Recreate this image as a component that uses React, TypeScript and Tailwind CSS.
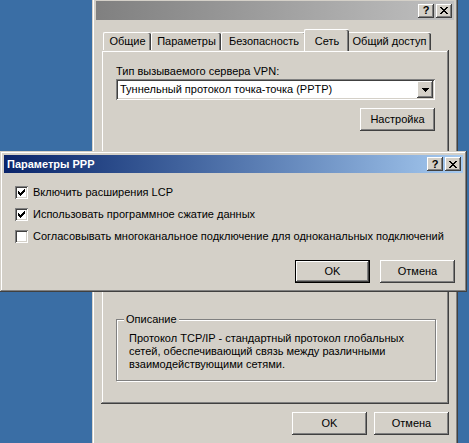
import React from "react";

const font = { fontFamily: '"Liberation Sans", Arial, sans-serif' };

// classic 3D bevels
const raised =
  "shadow-[inset_-1px_-1px_0_#404040,inset_1px_1px_0_#ffffff,inset_-2px_-2px_0_#808080,inset_2px_2px_0_#d4d0c8]";
const frame =
  "shadow-[inset_-1px_-1px_0_#404040,inset_1px_1px_0_#d4d0c8,inset_-2px_-2px_0_#808080,inset_2px_2px_0_#ffffff]";
const sunken =
  "shadow-[inset_1px_1px_0_#808080,inset_-1px_-1px_0_#ffffff,inset_2px_2px_0_#404040,inset_-2px_-2px_0_#d4d0c8]";

function CaptionButtons() {
  return (
    <div className="flex gap-[2px]">
      <div className={`w-[16px] h-[14px] bg-[#d4d0c8] ${raised} flex items-center justify-center text-[11px] font-bold text-black leading-none`}>
        ?
      </div>
      <div className={`w-[16px] h-[14px] bg-[#d4d0c8] ${raised} flex items-center justify-center`}>
        <svg width="8" height="7" viewBox="0 0 8 7">
          <path d="M0 0h2v1h1v1h2v-1h1v-1h2v1h-1v1h-1v1h-1v1h1v1h1v1h1v1h-2v-1h-1v-1h-2v1h-1v1h-2v-1h1v-1h1v-1h1v-1h-1v-1h-1v-1h-1z" fill="#000" />
        </svg>
      </div>
    </div>
  );
}

function Button({ label, isDefault, w = 75 }: { label: string; isDefault?: boolean; w?: number }) {
  if (isDefault) {
    return (
      <div className="border border-black" style={{ width: w }}>
        <div className={`h-[21px] bg-[#d4d0c8] ${raised} flex items-center justify-center text-black`}>
          {label}
        </div>
      </div>
    );
  }
  return (
    <div
      className={`h-[23px] bg-[#d4d0c8] ${raised} flex items-center justify-center text-black`}
      style={{ width: w }}
    >
      {label}
    </div>
  );
}

function Check({ checked }: { checked?: boolean }) {
  return (
    <div className={`w-[13px] h-[13px] bg-white ${sunken} flex items-center justify-center shrink-0`}>
      {checked && (
        <svg width="7" height="7" viewBox="0 0 7 7">
          <path d="M0 2h1v1h1v1h1v-1h1v-1h1v-1h1v-1h1v3h-1v1h-1v1h-1v1h-1v1h-1v-1h-1v-1h-1z" fill="#000" />
        </svg>
      )}
    </div>
  );
}

const tabs = [
  { label: "Общие", w: 48 },
  { label: "Параметры", w: 70 },
  { label: "Безопасность", w: 85 },
  { label: "Сеть", w: 41, active: true },
  { label: "Общий доступ", w: 84 },
];

export default function App() {
  return (
    <div className="relative w-[469px] h-[443px] overflow-hidden bg-[#3a6ea5] text-[11px] text-black whitespace-nowrap" style={font}>
      {/* back window: connection properties */}
      <div className={`ml-[92px] mt-[-3px] w-[366px] h-[470px] bg-[#d4d0c8] p-[4px] ${frame}`}>
        <div className="h-[19px] bg-gradient-to-r from-[#808080] to-[#c0c0c0] flex items-center justify-end pr-[2px]">
          <CaptionButtons />
        </div>

        <div className="pl-[7px] pt-[9px] flex items-end h-[30px]">
          {tabs.map((t) =>
            t.active ? (
              <div
                key={t.label}
                className="relative z-10 -mx-[2px] -mb-[1px] h-[22px] bg-[#d4d0c8] border-t border-l border-white rounded-tl-[2px] rounded-tr-[2px] shadow-[inset_-1px_0_0_#404040,inset_-2px_0_0_#808080] flex justify-center pt-[3px]"
                style={{ width: t.w + 4 }}
              >
                {t.label}
              </div>
            ) : (
              <div
                key={t.label}
                className="h-[18px] border-t border-l border-white rounded-tl-[2px] rounded-tr-[2px] shadow-[inset_-1px_0_0_#404040,inset_-2px_0_0_#808080] flex items-center justify-center"
                style={{ width: t.w }}
              >
                {t.label}
              </div>
            )
          )}
        </div>

        <div className={`ml-[5px] w-[348px] h-[354px] ${frame} pl-[15px] pr-[14px] pt-[14px]`}>
          <div className="leading-[14px]">Тип вызываемого сервера VPN:</div>
          <div className={`mt-[1px] h-[21px] w-[319px] bg-white ${sunken} flex items-center justify-between pl-[4px] pr-[2px]`}>
            <span>Туннельный протокол точка-точка (PPTP)</span>
            <div className={`w-[16px] h-[17px] bg-[#d4d0c8] ${raised} flex items-center justify-center`}>
              <svg width="7" height="4" viewBox="0 0 7 4">
                <path d="M0 0h7v1h-1v1h-1v1h-1v1h-1v-1h-1v-1h-1v-1h-1z" fill="#000" />
              </svg>
            </div>
          </div>
          <div className="mt-[8px] flex justify-end w-[319px]">
            <Button label="Настройка" />
          </div>

          <div className="mt-[188px] w-[320px] h-[62px] relative border border-[#808080] shadow-[1px_1px_0_#ffffff,inset_1px_1px_0_#ffffff]">
            <span className="absolute -top-[8px] left-[7px] px-[2px] bg-[#d4d0c8] leading-[14px]">Описание</span>
            <div className="pl-[12px] pt-[12px] leading-[13px]">
              Протокол TCP/IP - стандартный протокол глобальных
              <br />
              сетей, обеспечивающий связь между различными
              <br />
              взаимодействующими сетями.
            </div>
          </div>
        </div>

        <div className="mt-[8px] flex justify-end gap-[7px] pr-[5px]">
          <Button label="OK" />
          <Button label="Отмена" />
        </div>
      </div>

      {/* front dialog: PPP settings */}
      <div className={`absolute left-0 top-[151px] w-[467px] h-[141px] bg-[#d4d0c8] p-[4px] ${frame}`}>
        <div className="h-[18px] bg-gradient-to-r from-[#0a246a] to-[#a6caf0] flex items-center justify-between pl-[3px] pr-[2px]">
          <span className="text-white font-bold text-[11px]">Параметры PPP</span>
          <CaptionButtons />
        </div>
        <div className="pl-[11px] pt-[13px] flex flex-col gap-[9px]">
          <label className="flex items-center gap-[5px] h-[13px]">
            <Check checked />
            <span>Включить расширения LCP</span>
          </label>
          <label className="flex items-center gap-[5px] h-[13px]">
            <Check checked />
            <span>Использовать программное сжатие данных</span>
          </label>
          <label className="flex items-center gap-[5px] h-[13px]">
            <Check />
            <span>Согласовывать многоканальное подключение для одноканальных подключений</span>
          </label>
        </div>
        <div className="mt-[17px] flex justify-end gap-[10px] pr-[8px]">
          <Button label="OK" isDefault />
          <Button label="Отмена" />
        </div>
      </div>
    </div>
  );
}
